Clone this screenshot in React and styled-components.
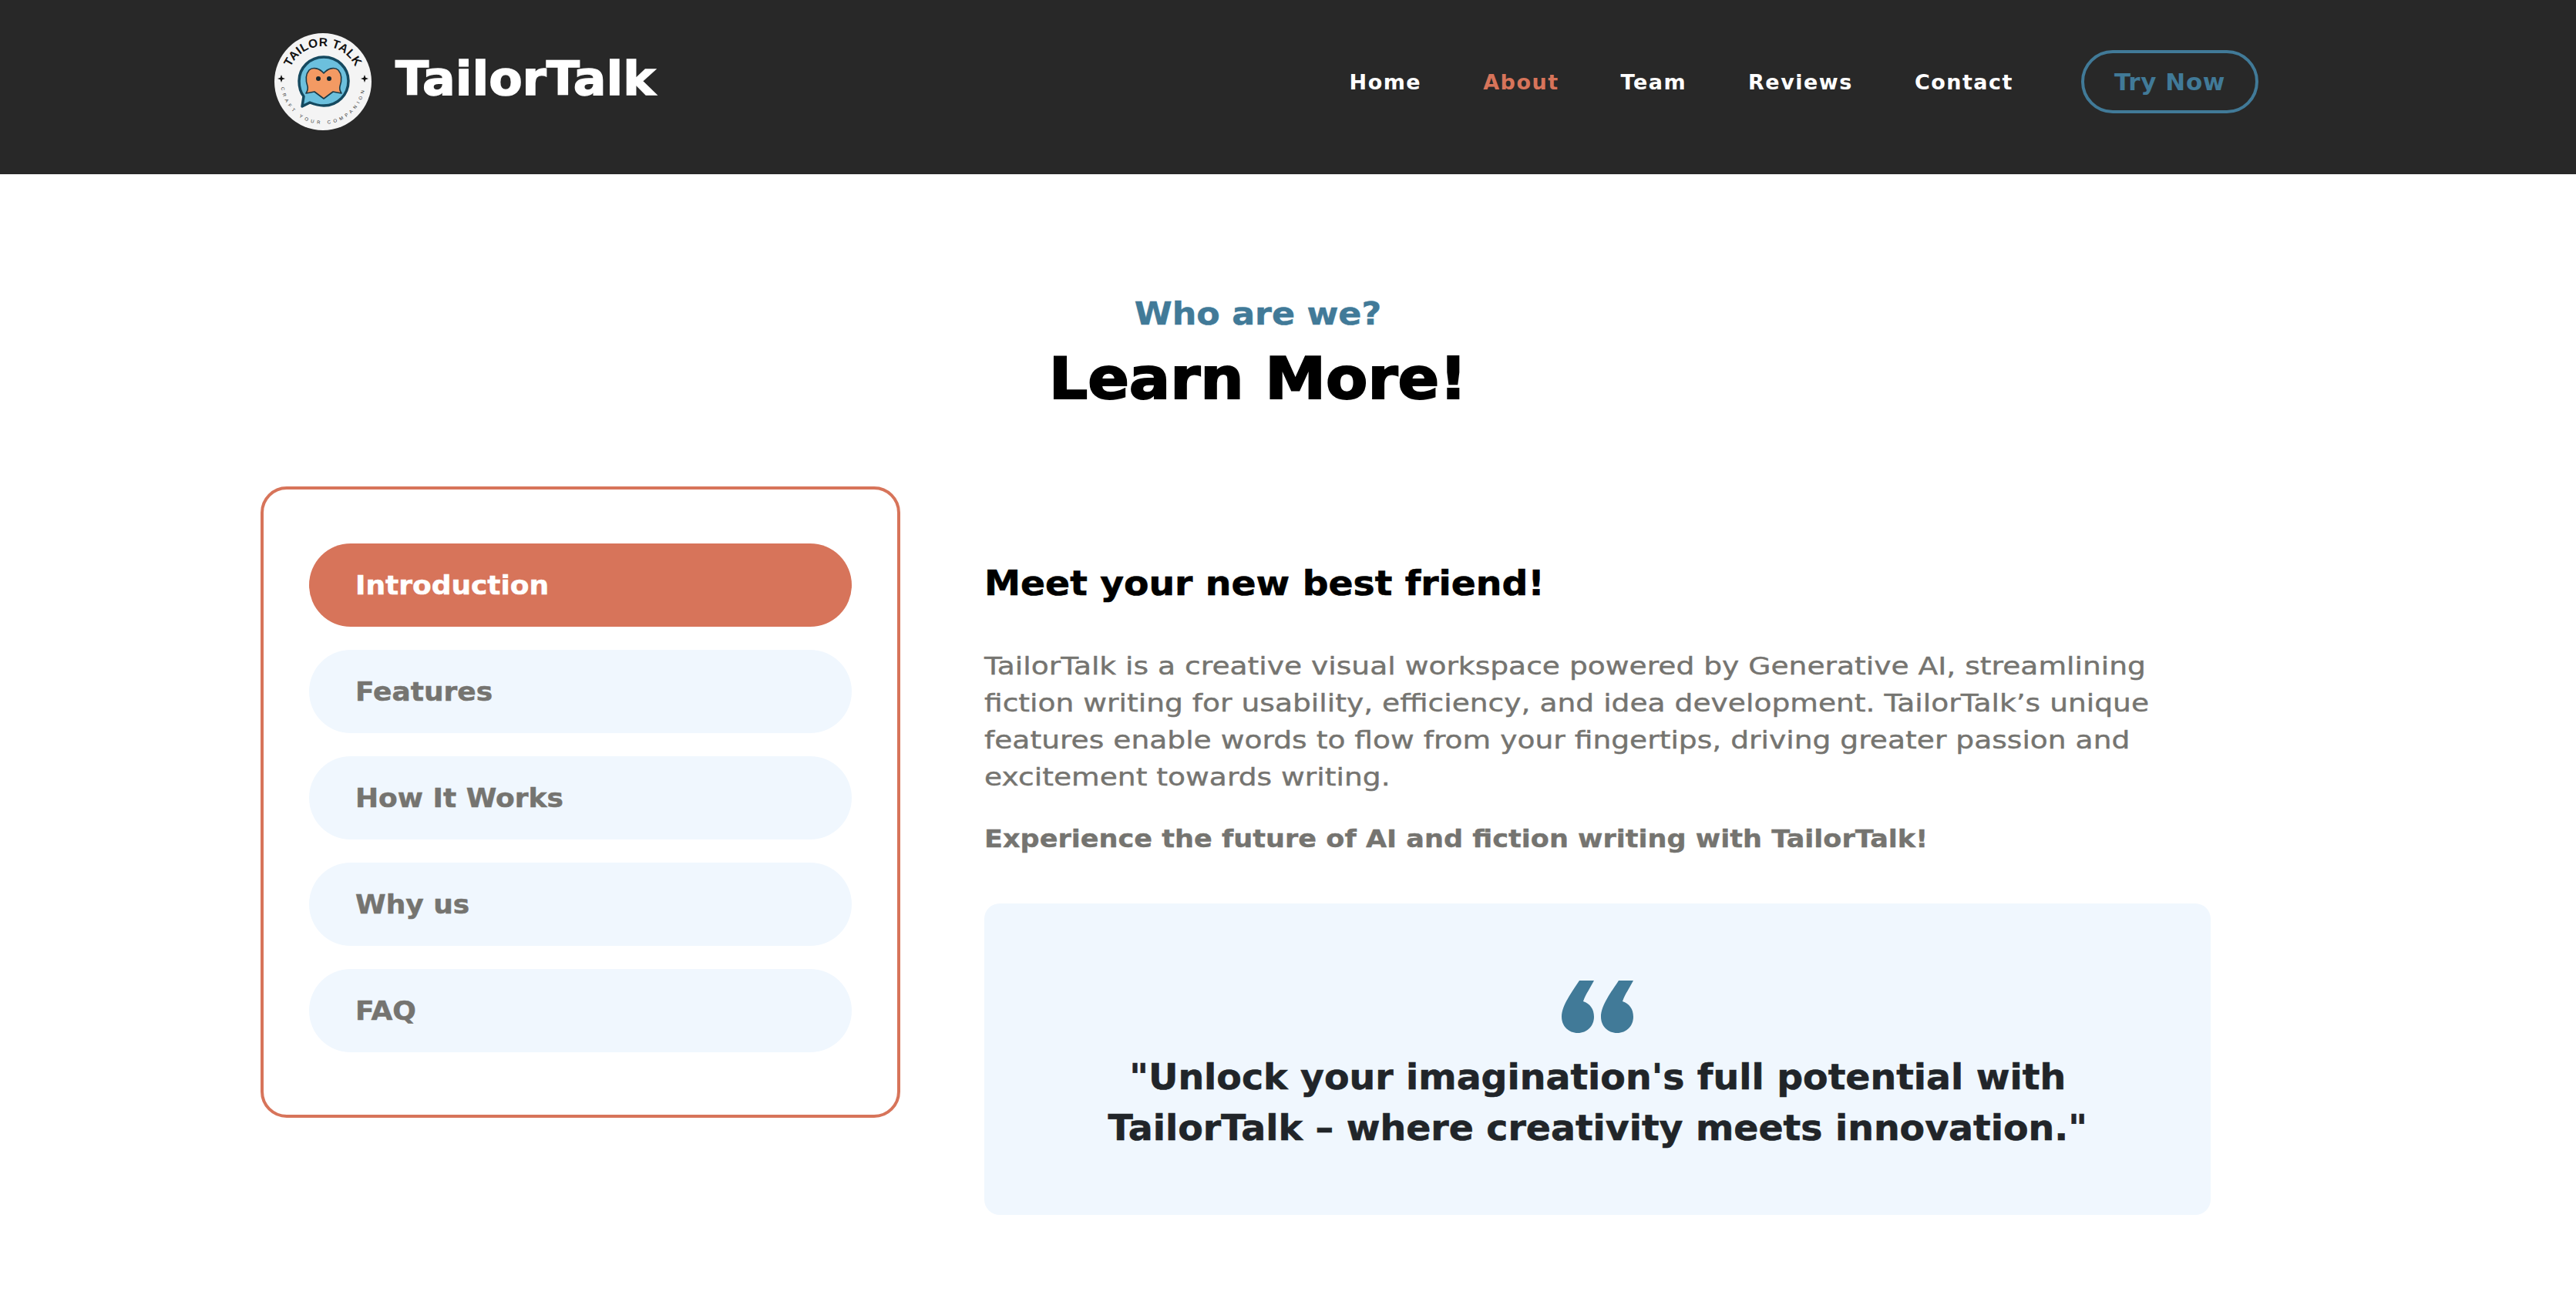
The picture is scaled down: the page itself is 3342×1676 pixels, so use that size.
import React from 'react'
import styled, { createGlobalStyle } from 'styled-components'

const GlobalStyle = createGlobalStyle`
  html, body {
    margin: 0;
    padding: 0;
    background: #fff;
  }
  body {
    font-family: "DejaVu Sans", "Liberation Sans", sans-serif;
  }
`

const Page = styled.div`
  width: 3342px;
  min-height: 1676px;
  background: #fff;
`

const Header = styled.header`
  height: 226px;
  box-sizing: border-box;
  background: #282828;
  display: flex;
  align-items: center;
  justify-content: space-between;
  padding: 0 412px 14px 356px;
`

const Brand = styled.a`
  display: flex;
  align-items: center;
  gap: 31px;
`

const BrandName = styled.span`
  color: #fff;
  font-size: 60px;
  font-weight: 700;
  line-height: 1;
  margin-bottom: 8px;
  -webkit-text-stroke: 1.5px #fff;
  transform: scaleX(1.055);
  transform-origin: left center;
`

const Nav = styled.nav`
  display: flex;
  align-items: center;
`

const NavLink = styled.a`
  color: ${(p) => (p.$active ? '#d7745a' : '#fff')};
  font-size: 27px;
  font-weight: 700;
  line-height: 1;
  letter-spacing: 1.5px;
  margin-right: 80px;
`

const TryButton = styled.a`
  width: 230px;
  height: 82px;
  box-sizing: border-box;
  border: 4px solid #417a98;
  border-radius: 41px;
  display: flex;
  align-items: center;
  justify-content: center;
  color: #417a98;
  font-size: 31px;
  font-weight: 700;
  letter-spacing: 0.6px;
  margin-left: 8px;
`

const Main = styled.main`
  width: 2588px;
  margin-left: 338px;
`

const Intro = styled.div`
  text-align: center;
  padding-top: 157px;
`

const Eyebrow = styled.p`
  margin: 0;
  color: #417a98;
  font-size: 40px;
  font-weight: 700;
  line-height: 48px;
  -webkit-text-stroke: 0.5px #417a98;
  transform: scaleX(1.108);
`

const Title = styled.h1`
  margin: 19px 0 0;
  color: #000;
  font-size: 74px;
  font-weight: 700;
  line-height: 82px;
  -webkit-text-stroke: 2px #000;
  transform: scaleX(1.07);
`

const Columns = styled.div`
  display: grid;
  grid-template-columns: 830px 1591px;
  column-gap: 109px;
  align-items: start;
  margin-top: 99px;
`

const TabPanel = styled.div`
  height: 819px;
  box-sizing: border-box;
  border: 4px solid #d7745a;
  border-radius: 34px;
  padding: 70px 59px 0;
  display: flex;
  flex-direction: column;
  gap: 30px;
`

const Tab = styled.button`
  height: 108px;
  border: 0;
  border-radius: 54px;
  padding: 0 0 0 60px;
  text-align: left;
  font-family: inherit;
  font-size: 33px;
  font-weight: 700;
  background: ${(p) => (p.$active ? '#d7745a' : '#f0f7fe')};
  color: ${(p) => (p.$active ? '#fff' : '#757470')};
`

const TabLabel = styled.span`
  display: inline-block;
  -webkit-text-stroke: 0.5px currentColor;
  transform: scaleX(1.09);
  transform-origin: left center;
`

const Content = styled.div`
  padding-top: 99px;
`

const Heading = styled.h2`
  margin: 0;
  color: #000;
  font-size: 44px;
  font-weight: 700;
  line-height: 54px;
  -webkit-text-stroke: 0.6px #000;
  transform: scaleX(1.074);
  transform-origin: left center;
`

const Paragraph = styled.p`
  margin: 56px 0 0;
  color: #757470;
  font-size: 32px;
  line-height: 48px;
  white-space: nowrap;
  -webkit-text-stroke: 0.4px #757470;
  transform: scaleX(1.175);
  transform-origin: left center;
`

const Emphasis = styled.p`
  margin: 32px 0 0;
  color: #757470;
  font-size: 32px;
  font-weight: 700;
  line-height: 48px;
  white-space: nowrap;
  -webkit-text-stroke: 0.4px #757470;
  transform: scaleX(1.096);
  transform-origin: left center;
`

const QuoteBox = styled.div`
  height: 404px;
  box-sizing: border-box;
  margin-top: 60px;
  padding-top: 100px;
  background: #f0f7fe;
  border-radius: 20px;
  display: flex;
  flex-direction: column;
  align-items: center;
`

const QuoteText = styled.p`
  margin: 24px 0 0;
  color: #212529;
  font-size: 46px;
  font-weight: 700;
  line-height: 66px;
  text-align: center;
  white-space: nowrap;
  -webkit-text-stroke: 0.6px #212529;
  transform: scaleX(1.03);
`

function QuoteMark() {
  const mark = 'M42 0 L23 0 C14 14 0 32 0 47 C0 59 9 68 21 68 C33 68 42 59 42 47 C42 37 37 30 28 27 C31 18 38 8 42 0 Z'
  return (
    <svg width="93" height="68" viewBox="0 0 93 68">
      <path d={mark} fill="#417a98" />
      <path d={mark} fill="#417a98" transform="translate(51 0)" />
    </svg>
  )
}

function Logo() {
  const star = 'l1.3 3.7 3.7 1.3 -3.7 1.3 -1.3 3.7 -1.3 -3.7 -3.7 -1.3 3.7 -1.3 Z'
  return (
    <svg width="126" height="126" viewBox="0 0 126 126">
      <defs>
        <path id="logoTop" d="M17 63 A46 46 0 0 1 109 63" />
        <path id="logoBottom" d="M8 63 A55 55 0 0 0 118 63" />
      </defs>
      <circle cx="63" cy="63" r="63" fill="#f4f4f4" />
      <text fontFamily="Liberation Sans, sans-serif" fontSize="15.5" fontWeight="700" fill="#111" letterSpacing="0.4">
        <textPath href="#logoTop" startOffset="50%" textAnchor="middle">TAILOR TALK</textPath>
      </text>
      <text fontFamily="Liberation Sans, sans-serif" fontSize="6" fill="#333" letterSpacing="4">
        <textPath href="#logoBottom" startOffset="50%" textAnchor="middle">CRAFT YOUR COMPANION</textPath>
      </text>
      <path d={`M9 54 ${star}`} fill="#111" />
      <path d={`M117 54 ${star}`} fill="#111" />
      <path d="M64 31 C82 31 96 45 96 62 C96 80 82 94 64 94 C57 94 51 92 46 90 L36 95 L38 82 C34 77 32 70 32 62 C32 45 46 31 64 31 Z" fill="#6cc0dd" stroke="#15495f" strokeWidth="3.5" strokeLinejoin="round" />
      <path d="M64 52 C69 46 78 43 83 48 C88 54 87 63 85 69 C84 73 85 75 87 78 L76 76 L64 85 L52 76 L41 78 C43 75 44 73 43 69 C41 63 40 54 45 48 C50 43 59 46 64 52 Z" fill="#f39a63" stroke="#1b3a48" strokeWidth="1.6" strokeLinejoin="round" />
      <circle cx="57" cy="59" r="3" fill="#14262e" />
      <circle cx="71" cy="59" r="3" fill="#14262e" />
    </svg>
  )
}

const links = [
  { label: 'Home' },
  { label: 'About', active: true },
  { label: 'Team' },
  { label: 'Reviews' },
  { label: 'Contact' },
]

const tabs = ['Introduction', 'Features', 'How It Works', 'Why us', 'FAQ']

export default function App() {
  return (
    <Page>
      <GlobalStyle />
      <Header>
        <Brand>
          <Logo />
          <BrandName>TailorTalk</BrandName>
        </Brand>
        <Nav>
          {links.map((link) => (
            <NavLink key={link.label} $active={link.active}>{link.label}</NavLink>
          ))}
          <TryButton>Try Now</TryButton>
        </Nav>
      </Header>
      <Main>
        <Intro>
          <Eyebrow>Who are we?</Eyebrow>
          <Title>Learn More!</Title>
        </Intro>
        <Columns>
          <TabPanel>
            {tabs.map((tab, i) => (
              <Tab key={tab} $active={i === 0}>
                <TabLabel>{tab}</TabLabel>
              </Tab>
            ))}
          </TabPanel>
          <Content>
            <Heading>Meet your new best friend!</Heading>
            <Paragraph>
              TailorTalk is a creative visual workspace powered by Generative AI, streamlining<br />
              fiction writing for usability, efficiency, and idea development. TailorTalk’s unique<br />
              features enable words to flow from your fingertips, driving greater passion and<br />
              excitement towards writing.
            </Paragraph>
            <Emphasis>Experience the future of AI and fiction writing with TailorTalk!</Emphasis>
            <QuoteBox>
              <QuoteMark />
              <QuoteText>
                "Unlock your imagination's full potential with<br />
                TailorTalk – where creativity meets innovation."
              </QuoteText>
            </QuoteBox>
          </Content>
        </Columns>
      </Main>
    </Page>
  )
}
